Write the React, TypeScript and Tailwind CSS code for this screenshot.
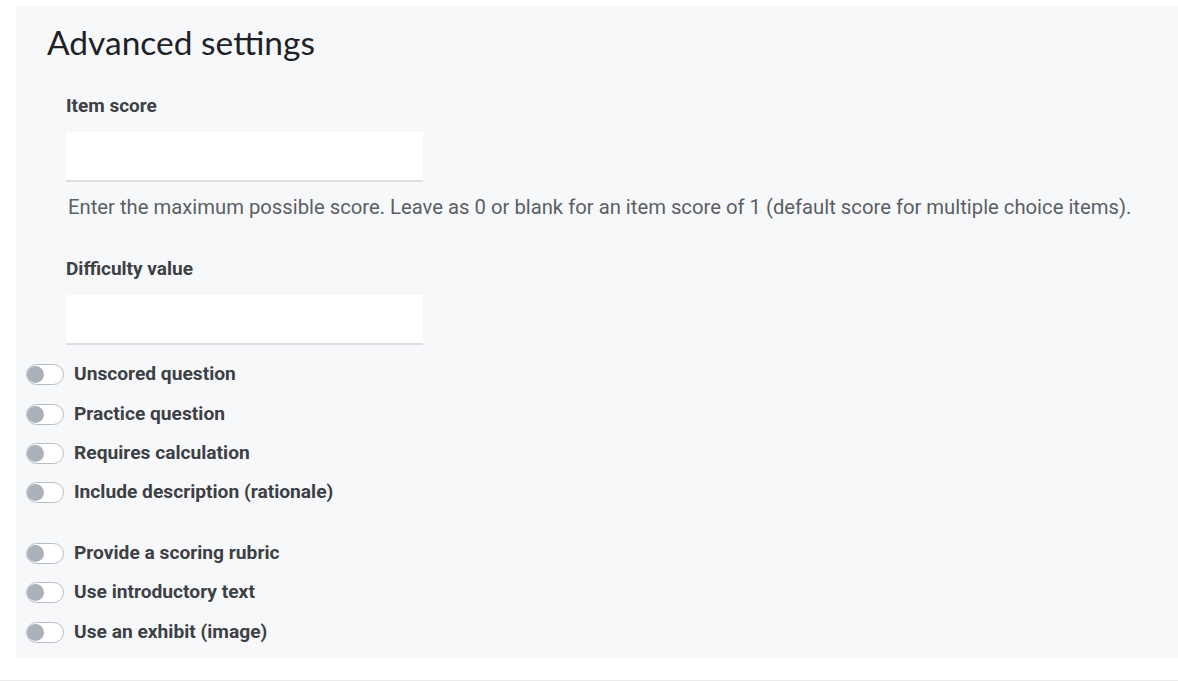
import React from "react"

const roboto = { fontFamily: "Roboto, 'Liberation Sans', sans-serif" }

function Toggle() {
  return (
    <span className="relative inline-block h-[21px] w-[38px] shrink-0 rounded-full border border-[#b9bdc3] bg-white">
      <span className="absolute left-0 top-[1px] h-[17px] w-[17px] rounded-full bg-[#aab1b9]" />
    </span>
  )
}

function ToggleRow({ label }: { label: string }) {
  return (
    <div className="flex h-[39.4px] items-center gap-[10px]">
      <Toggle />
      <span className="text-[19.2px] font-bold text-[#3d4044]">{label}</span>
    </div>
  )
}

function Field({ label }: { label: string }) {
  return (
    <div className="pl-[50px]">
      <div className="h-6 text-[19px] font-bold leading-6 text-[#3d4044]">{label}</div>
      <div className="mt-[14px] h-[50px] w-[357px] border-b-2 border-[#dcdee2] bg-white" />
    </div>
  )
}

export default function App() {
  return (
    <div className="h-[682px] overflow-hidden bg-white" style={roboto}>
      <div className="ml-4 mt-[6px] h-[652px] bg-[#f7f8fa] pt-[18px]">
        <h2
          className="pl-[31px] text-[33.5px] leading-9 text-[#1e2226]"
          style={{ fontFamily: "Lato, 'Open Sans', sans-serif" }}
        >
          Advanced settings
        </h2>
        <div className="mt-[34px]">
          <Field label="Item score" />
          <p className="mt-[13px] pl-[52px] text-[20.25px] leading-6 text-[#5b5f64]">
            Enter the maximum possible score. Leave as 0 or blank for an item score of 1 (default score for multiple choice items).
          </p>
          <div className="mt-[38px]">
            <Field label="Difficulty value" />
          </div>
        </div>
        <div className="mt-[10px] pl-[10px]">
          <ToggleRow label="Unscored question" />
          <ToggleRow label="Practice question" />
          <ToggleRow label="Requires calculation" />
          <ToggleRow label="Include description (rationale)" />
          <div className="h-[21px]" />
          <ToggleRow label="Provide a scoring rubric" />
          <ToggleRow label="Use introductory text" />
          <ToggleRow label="Use an exhibit (image)" />
        </div>
      </div>
      <div className="mt-[22px] h-px bg-[#ececec]" />
    </div>
  )
}
